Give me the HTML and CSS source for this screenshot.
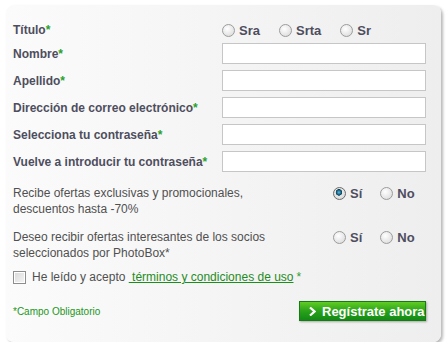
FILE: index.html
```html
<!DOCTYPE html>
<html lang="es">
  <head>
    <meta charset="UTF-8" />
    <title>Registro</title>
    <link rel="stylesheet" href="styles.css">
  </head>
  <body>
    <form class="panel">
      <div class="row title-row">
        <label class="lbl">Título<span class="req">*</span></label>
        <div class="opts">
          <label class="opt"><input type="radio" name="titulo" /> Sra</label>
          <label class="opt"><input type="radio" name="titulo" /> Srta</label>
          <label class="opt"><input type="radio" name="titulo" /> Sr</label>
        </div>
      </div>
      <div class="row">
        <label class="lbl">Nombre<span class="req">*</span></label>
        <input type="text" class="field" />
      </div>
      <div class="row">
        <label class="lbl">Apellido<span class="req">*</span></label>
        <input type="text" class="field" />
      </div>
      <div class="row">
        <label class="lbl">Dirección de correo electrónico<span class="req">*</span></label>
        <input type="text" class="field" />
      </div>
      <div class="row">
        <label class="lbl">Selecciona tu contraseña<span class="req">*</span></label>
        <input type="password" class="field" />
      </div>
      <div class="row">
        <label class="lbl">Vuelve a introducir tu contraseña<span class="req">*</span></label>
        <input type="password" class="field" />
      </div>

      <div class="offer">
        <p class="offer-text">Recibe ofertas exclusivas y promocionales,<br />descuentos hasta -70%</p>
        <div class="yesno">
          <label class="opt"><input type="radio" name="ofertas" checked /> Sí</label>
          <label class="opt"><input type="radio" name="ofertas" /> No</label>
        </div>
      </div>
      <div class="offer">
        <p class="offer-text">Deseo recibir ofertas interesantes de los socios<br />seleccionados por PhotoBox*</p>
        <div class="yesno">
          <label class="opt"><input type="radio" name="socios" /> Sí</label>
          <label class="opt"><input type="radio" name="socios" /> No</label>
        </div>
      </div>

      <div class="terms">
        <input type="checkbox" id="acepto" />
        <label for="acepto">He leído y acepto <a href="#">&nbsp;términos y condiciones de uso</a><span class="req-plain">*</span></label>
      </div>

      <div class="foot">
        <span class="mandatory">*Campo Obligatorio</span>
        <button type="button" class="submit">
          <svg class="chev" width="7" height="9" viewBox="0 0 7 9"><path d="M1 0.5 L5.5 4.5 L1 8.5" fill="none" stroke="#fff" stroke-width="2.2"/></svg>
          <span class="submit-text">Regístrate ahora</span>
        </button>
      </div>
    </form>
  </body>
</html>
```

FILE: styles.css
```css
body {
  margin: 0;
  background: #fff;
  font-family: "Liberation Sans", Arial, sans-serif;
  font-size: 12px;
  color: #505050;
}
.panel {
  width: 413px;
  height: 322px;
  margin: 5px 0 0 6px;
  padding: 15px 15px 0 7px;
  border-radius: 8px;
  background: linear-gradient(to right, #fbfbfb, #efeeef);
  box-shadow: 2px 2px 3px rgba(0, 0, 0, 0.28);
  box-sizing: content-box;
}
.row {
  display: flex;
  align-items: center;
  height: 21px;
  margin-bottom: 6px;
}
.title-row {
  height: 20px;
  margin-bottom: 3px;
}
.lbl {
  width: 209px;
  font-weight: bold;
  color: #4e4e5e;
}
.req {
  color: #2aa12a;
}
.field {
  width: 204px;
  height: 21px;
  margin: 0;
  padding: 0 3px;
  box-sizing: border-box;
  border: 1px solid #c6c6c6;
  background: #fff;
}
.opts {
  display: flex;
  gap: 19px;
}
.opt {
  display: flex;
  align-items: center;
  gap: 4px;
  font-weight: bold;
  font-size: 13px;
  color: #4e4e5e;
}
.opt input {
  appearance: none;
  width: 13px;
  height: 13px;
  margin: 0;
  border: 1px solid #9c9c9c;
  border-radius: 50%;
  background: radial-gradient(circle at 40% 35%, #fff, #e2e2e2 70%, #cfcfcf);
  box-sizing: border-box;
}
.opt input:checked {
  background: radial-gradient(circle at 45% 40%, #5fc0e0 0, #1c6a8a 2px, #0e3d55 3px, #e8e8e8 3.5px, #d0d0d0);
  border-color: #6c6c6c;
}
.offer {
  display: flex;
  align-items: flex-start;
  margin-top: 13px;
}
.offer + .offer {
  margin-top: 12px;
}
.offer-text {
  width: 320px;
  margin: 0;
  line-height: 16px;
}
.yesno {
  display: flex;
  gap: 18px;
  padding-top: 1px;
}
.terms {
  display: flex;
  align-items: center;
  gap: 6px;
  margin-top: 8px;
  line-height: 16px;
}
.terms input {
  appearance: none;
  width: 13px;
  height: 13px;
  margin: 0;
  border: 1px solid #8e8e8e;
  background: linear-gradient(135deg, #d8d8d8, #f6f6f6);
  box-shadow: inset 0 0 0 1px #fff;
}
.terms a {
  color: #1f8c1f;
}
.req-plain {
  color: #2aa12a;
  margin-left: 3px;
}
.foot {
  display: flex;
  align-items: center;
  justify-content: space-between;
  margin-top: 16px;
}
.mandatory {
  color: #229622;
  font-size: 10px;
}
.submit {
  display: flex;
  align-items: center;
  width: 127px;
  height: 20px;
  padding: 0 0 0 9px;
  border: 1px solid #177a17;
  background: linear-gradient(#61cc24, #2aa21a 50%, #138a14);
  color: #fff;
  font-family: "Liberation Sans", Arial, sans-serif;
  font-weight: bold;
  font-size: 13px;
  white-space: nowrap;
  box-shadow: 1px 1px 2px rgba(0, 0, 0, 0.3);
}
.chev {
  flex: none;
  margin-right: 6px;
}
```
